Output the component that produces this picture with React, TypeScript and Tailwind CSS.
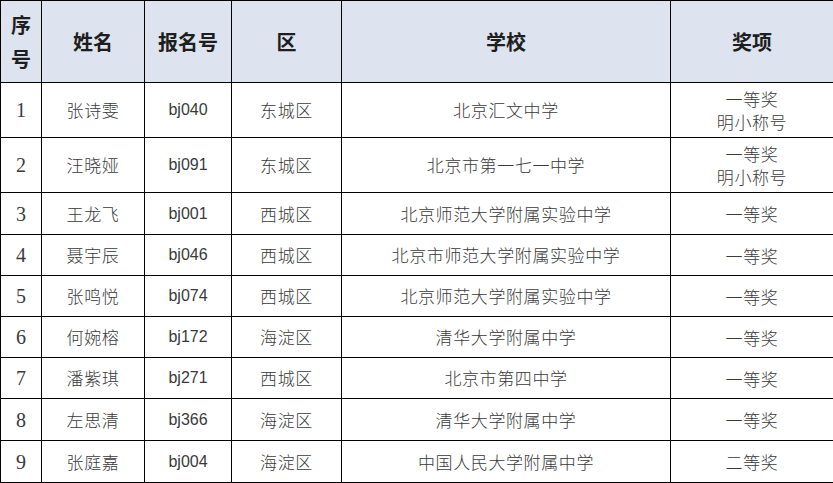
import React from "react";

const rows = [
  { n: "1", name: "张诗雯", id: "bj040", d: "东城区", s: "北京汇文中学", a: ["一等奖", "明小称号"], h: "h-[55px]" },
  { n: "2", name: "汪晓娅", id: "bj091", d: "东城区", s: "北京市第一七一中学", a: ["一等奖", "明小称号"], h: "h-[55px]" },
  { n: "3", name: "王龙飞", id: "bj001", d: "西城区", s: "北京师范大学附属实验中学", a: ["一等奖"], h: "h-[42px]" },
  { n: "4", name: "聂宇辰", id: "bj046", d: "西城区", s: "北京市师范大学附属实验中学", a: ["一等奖"], h: "h-[41px]" },
  { n: "5", name: "张鸣悦", id: "bj074", d: "西城区", s: "北京师范大学附属实验中学", a: ["一等奖"], h: "h-[41px]" },
  { n: "6", name: "何婉榕", id: "bj172", d: "海淀区", s: "清华大学附属中学", a: ["一等奖"], h: "h-[41px]" },
  { n: "7", name: "潘紫琪", id: "bj271", d: "西城区", s: "北京市第四中学", a: ["一等奖"], h: "h-[41px]" },
  { n: "8", name: "左思清", id: "bj366", d: "海淀区", s: "清华大学附属中学", a: ["一等奖"], h: "h-[42px]" },
  { n: "9", name: "张庭嘉", id: "bj004", d: "海淀区", s: "中国人民大学附属中学", a: ["二等奖"], h: "h-[42px]" },
];

const cjk = "font-['Microsoft_YaHei','Noto_Sans_CJK_SC',sans-serif]";

export default function App() {
  return (
    <div className="w-[833px] h-[483px] bg-white overflow-hidden">
      <table className="table-fixed border-collapse w-[833px] text-[#3a3a3a]">
        <colgroup>
          <col className="w-[41px]" />
          <col className="w-[103px]" />
          <col className="w-[87px]" />
          <col className="w-[110px]" />
          <col className="w-[329px]" />
          <col className="w-[163px]" />
        </colgroup>
        <thead>
          <tr className={`h-[82px] bg-[#dde4ef] text-[#1e1e1e] font-bold text-[20px] ${cjk}`}>
            <th className="border border-black p-0 leading-[34px] font-bold">序<br />号</th>
            <th className="border border-black p-0 font-bold">姓名</th>
            <th className="border border-black p-0 font-bold">报名号</th>
            <th className="border border-black p-0 font-bold">区</th>
            <th className="border border-black p-0 font-bold">学校</th>
            <th className="border border-black p-0 font-bold">奖项</th>
          </tr>
        </thead>
        <tbody>
          {rows.map((r) => (
            <tr key={r.n} className={r.h}>
              <td className="border border-black p-0 text-center font-['Liberation_Serif',serif] text-[20px]">{r.n}</td>
              <td className={`border border-black p-0 text-center text-[17px] font-light tracking-[0.6px] ${cjk}`}>{r.name}</td>
              <td className="border border-black p-0 text-center text-[16px] font-['Liberation_Sans',sans-serif]">{r.id}</td>
              <td className={`border border-black p-0 text-center text-[17px] font-light tracking-[0.6px] ${cjk}`}>{r.d}</td>
              <td className={`border border-black p-0 text-center text-[17px] font-light tracking-[0.6px] ${cjk}`}>{r.s}</td>
              <td className={`border border-black p-0 text-center text-[17px] font-light tracking-[0.6px] leading-[23px] ${cjk}`}>
                {r.a.map((t, i) => (
                  <div key={i}>{t}</div>
                ))}
              </td>
            </tr>
          ))}
        </tbody>
      </table>
    </div>
  );
}
